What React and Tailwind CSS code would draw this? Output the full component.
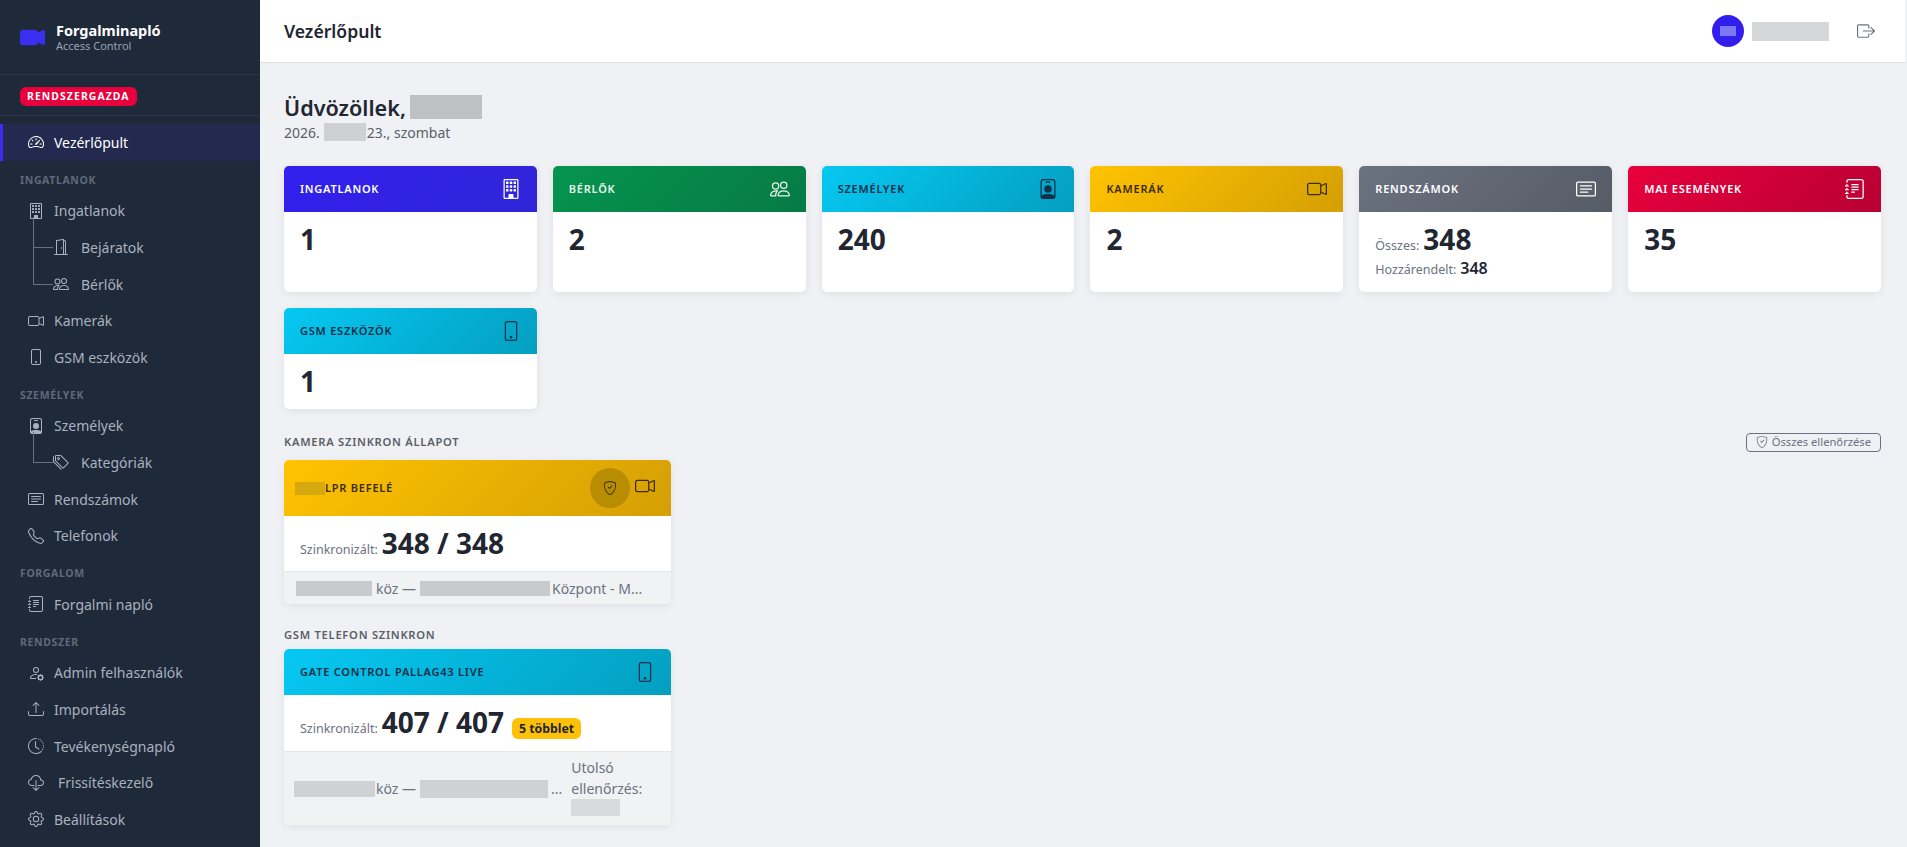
import React from "react";
import {
  BsSpeedometer2, BsBuilding, BsDoorOpen, BsPeople, BsCameraVideo, BsCameraVideoFill, BsPhone,
  BsPersonBadge, BsTags, BsCardText, BsTelephone, BsJournalText, BsPersonGear, BsUpload,
  BsClockHistory, BsCloudDownload, BsGear, BsBoxArrowRight, BsShieldCheck,
} from "react-icons/bs";

const blue = "bg-linear-135 from-[#321fee] to-[#3025d8] text-white";
const green = "bg-linear-135 from-[#05944f] to-[#067a45] text-[#e8f6ee]";
const cyan = "bg-linear-135 from-[#06c8f2] to-[#049fc0] text-[#12304a]";
const yellow = "bg-linear-135 from-[#ffc300] to-[#d49f05] text-[#3b2c08]";
const gray = "bg-linear-135 from-[#6b7280] to-[#565c66] text-white";
const red = "bg-linear-135 from-[#e8003c] to-[#b80033] text-white";
const cardShadow = "shadow-[0_2px_8px_rgba(0,0,0,0.07)]";

function NavItem({ icon: Icon, label, active, extra }) {
  return (
    <div
      className={`flex items-center h-[36.6px] pl-[25px] text-[14px] border-l-[3px] ${
        active ? "bg-[#23294f] border-[#3a2ff0] text-white" : "border-transparent text-[#a9b2bf]"
      }`}
    >
      <Icon className={`w-4 h-4 shrink-0 ${extra ? "mr-[14px]" : "mr-[10px]"}`} />
      <span>{label}</span>
    </div>
  );
}

function SubItem({ icon: Icon, label, last }) {
  return (
    <div className="relative flex items-center h-[36.6px] pl-[53px] text-[14px] text-[#a9b2bf]">
      <div className={`absolute left-[33px] top-[-12px] w-px bg-[#667080] ${last ? "h-[31px]" : "h-[49px]"}`} />
      <div className="absolute left-[33px] top-[18px] w-[20px] h-px bg-[#667080]" />
      <Icon className="w-4 h-4 mr-[12px] shrink-0" />
      <span>{label}</span>
    </div>
  );
}

function NavTitle({ children }) {
  return (
    <div className="h-[32px] pt-[12px] pl-[20px] text-[10.5px] leading-[14px] font-bold tracking-[0.06em] text-[#5e6a7b]">
      {children}
    </div>
  );
}

function Sidebar() {
  return (
    <aside className="w-[260px] shrink-0 h-[847px] bg-[#1e2939] overflow-hidden">
      <div className="flex items-center h-[75px] pl-[20px] border-b border-[#2c3747]">
        <BsCameraVideoFill className="w-[25px] h-[25px] text-[#3a2ff0] mr-[11px]" />
        <div>
          <div className="text-[14.5px] leading-[17px] font-bold text-white">Forgalminapló</div>
          <div className="text-[11px] leading-[14px] text-[#9aa3b0]">Access Control</div>
        </div>
      </div>
      <div className="h-[41px] pt-[12px] pl-[20px] border-b border-[#2c3747]">
        <span className="block w-fit bg-[#e8003c] text-white text-[10.4px] leading-[19px] font-bold tracking-[0.105em] px-[7px] rounded-md">
          RENDSZERGAZDA
        </span>
      </div>
      <div className="pt-[8px]">
        <NavItem icon={BsSpeedometer2} label="Vezérlőpult" active />
        <NavTitle>INGATLANOK</NavTitle>
        <NavItem icon={BsBuilding} label="Ingatlanok" />
        <SubItem icon={BsDoorOpen} label="Bejáratok" />
        <SubItem icon={BsPeople} label="Bérlők" last />
        <NavItem icon={BsCameraVideo} label="Kamerák" />
        <NavItem icon={BsPhone} label="GSM eszközök" />
        <NavTitle>SZEMÉLYEK</NavTitle>
        <NavItem icon={BsPersonBadge} label="Személyek" />
        <SubItem icon={BsTags} label="Kategóriák" last />
        <NavItem icon={BsCardText} label="Rendszámok" />
        <NavItem icon={BsTelephone} label="Telefonok" />
        <NavTitle>FORGALOM</NavTitle>
        <NavItem icon={BsJournalText} label="Forgalmi napló" />
        <NavTitle>RENDSZER</NavTitle>
        <NavItem icon={BsPersonGear} label="Admin felhasználók" />
        <NavItem icon={BsUpload} label="Importálás" />
        <NavItem icon={BsClockHistory} label="Tevékenységnapló" />
        <NavItem icon={BsCloudDownload} label="Frissítéskezelő" extra />
        <NavItem icon={BsGear} label="Beállítások" />
      </div>
    </aside>
  );
}

function Blur({ className }) {
  return <span className={`inline-block ${className}`} />;
}

function StatCard({ title, icon: Icon, color, value, short, children }) {
  return (
    <div className={`${short ? "h-[101px]" : "h-[126px]"} rounded-[5px] bg-white ${cardShadow} overflow-hidden`}>
      <div className={`h-[46px] flex items-center justify-between px-[16px] ${color}`}>
        <span className="text-[11px] font-semibold tracking-[0.07em]">{title}</span>
        <Icon className="w-5 h-5 mb-[1px]" />
      </div>
      <div className="pt-[9px] pl-[16px]">
        {children || <div className="text-[28px] leading-[36px] font-bold text-[#212631]">{value}</div>}
      </div>
    </div>
  );
}

function SectionTitle({ children }) {
  return <div className="h-4 text-[11.2px] leading-4 font-semibold tracking-[0.065em] text-[#5b5f66]">{children}</div>;
}

function App() {
  return (
    <div className="flex h-[847px] overflow-hidden bg-[#eff1f5] font-['Noto_Sans',sans-serif]">
      <Sidebar />
      <div className="flex-1 min-w-0 pr-[2px]">
        <header className="h-[63px] bg-white border-b border-[#dcdee2] flex items-center justify-between pl-[24px] pr-[30px]">
          <h1 className="text-[17.6px] font-semibold text-[#212631]">Vezérlőpult</h1>
          <div className="flex items-center">
            <div className="w-8 h-8 rounded-full bg-[#321fee] flex items-center justify-center">
              <span className="w-4 h-[10px] bg-[#7d78f5]" />
            </div>
            <Blur className="w-[77px] h-[19px] ml-2 bg-[#d6d7d9]" />
            <BsBoxArrowRight className="w-[18px] h-[18px] ml-[28px] text-[#6b7280]" />
          </div>
        </header>
        <main className="px-[24px] pt-[32px]">
          <div className="flex items-end h-[26px] text-[21.6px] leading-[26px] font-semibold text-[#212631]">
            <span>Üdvözöllek,</span>
            <Blur className="w-[72px] h-[24px] ml-[4px] mb-[2px] bg-[#bfc0c3]" />
          </div>
          <div className="flex items-center h-[20px] mt-[1px] text-[14px] text-[#5b5f66]">
            <span>2026.</span>
            <Blur className="w-[42px] h-[18px] ml-[4px] mr-[1px] bg-[#cfd0d2]" />
            <span>23., szombat</span>
          </div>
          <div className="grid grid-cols-6 gap-x-4 gap-y-[16px] mt-[24px]">
            <StatCard title="INGATLANOK" icon={BsBuilding} color={blue} value="1" />
            <StatCard title="BÉRLŐK" icon={BsPeople} color={green} value="2" />
            <StatCard title="SZEMÉLYEK" icon={BsPersonBadge} color={cyan} value="240" />
            <StatCard title="KAMERÁK" icon={BsCameraVideo} color={yellow} value="2" />
            <StatCard title="RENDSZÁMOK" icon={BsCardText} color={gray}>
              <div className="flex items-baseline h-[36px] text-[12.5px] text-[#6b7280]">
                Összes:
                <span className="ml-[4px] text-[28px] leading-[36px] font-bold text-[#212631]">348</span>
              </div>
              <div className="flex items-baseline -mt-[1px] text-[12.5px] text-[#6b7280]">
                Hozzárendelt:
                <span className="ml-[4px] text-[16px] font-semibold text-[#212631]">348</span>
              </div>
            </StatCard>
            <StatCard title="MAI ESEMÉNYEK" icon={BsJournalText} color={red} value="35" />
            <StatCard title="GSM ESZKÖZÖK" icon={BsPhone} color={cyan} value="1" short />
          </div>

          <div className="flex items-center justify-between mt-[23px] h-[20px]">
            <SectionTitle>KAMERA SZINKRON ÁLLAPOT</SectionTitle>
            <div className="flex items-center h-[19px] px-[9px] border border-[#6b7280] rounded text-[11.2px] text-[#6b7280]">
              <BsShieldCheck className="w-3 h-3 mr-1" />
              Összes ellenőrzése
            </div>
          </div>
          <div className={`w-[387px] mt-[8px] rounded-[5px] bg-white ${cardShadow} overflow-hidden`}>
            <div className={`h-[56px] flex items-center justify-between pl-[11px] pr-[16px] ${yellow}`}>
              <div className="flex items-center text-[11px] font-semibold tracking-[0.07em]">
                <span className="w-[30px] h-[13px] bg-[#d6a90e]" />
                LPR BEFELÉ
              </div>
              <div className="flex items-center">
                <div className="w-10 h-10 rounded-full bg-[#b98d02] flex items-center justify-center">
                  <BsShieldCheck className="w-[14px] h-[14px]" />
                </div>
                <BsCameraVideo className="w-5 h-5 ml-[5px] mb-[4px]" />
              </div>
            </div>
            <div className="h-[56px] flex items-baseline pt-[6px] pl-[16px] text-[12.5px] text-[#6b7280] border-b border-[#e6e7ea]">
              <span>Szinkronizált:</span>
              <span className="ml-[4px] text-[28px] leading-[42px] font-bold text-[#212631]">348 / 348</span>
            </div>
            <div className="h-[32px] flex items-center pl-[12px] text-[14px] bg-[#f1f2f4] text-[#6b7280]">
              <Blur className="w-[76px] h-[15px] bg-[#c9cacc]" />
              <span className="ml-1">köz —</span>
              <Blur className="w-[130px] h-[15px] ml-1 bg-[#c9cacc]" />
              <span className="ml-[2px]">Központ - M...</span>
            </div>
          </div>

          <div className="mt-[23px]">
            <SectionTitle>GSM TELEFON SZINKRON</SectionTitle>
          </div>
          <div className={`w-[387px] mt-[6px] rounded-[5px] bg-white ${cardShadow} overflow-hidden`}>
            <div className={`h-[46px] flex items-center justify-between px-[16px] ${cyan}`}>
              <span className="text-[11px] font-semibold tracking-[0.07em]">GATE CONTROL PALLAG43 LIVE</span>
              <BsPhone className="w-5 h-5" />
            </div>
            <div className="h-[57px] flex items-baseline pt-[6px] pl-[16px] text-[12.5px] text-[#6b7280] border-b border-[#e6e7ea]">
              <span>Szinkronizált:</span>
              <span className="ml-[4px] text-[28px] leading-[42px] font-bold text-[#212631]">407 / 407</span>
              <span className="ml-2 px-[7px] h-[21px] leading-[21px] rounded-md bg-[#ffc107] text-[12.3px] font-bold text-[#212631]">
                5 többlet
              </span>
            </div>
            <div className="h-[73px] flex items-center pl-[10px] text-[14px] bg-[#f1f2f4] text-[#6b7280]">
              <Blur className="w-[81px] h-[16px] bg-[#d0d1d3]" />
              <span className="ml-[1px]">köz —</span>
              <Blur className="w-[128px] h-[18px] ml-1 bg-[#d0d1d3]" />
              <span className="ml-[3px]">...</span>
              <div className="ml-[9px] leading-[21px]">
                <div>Utolsó</div>
                <div>ellenőrzés:</div>
                <Blur className="block w-[49px] h-[17px] bg-[#d9dadc]" />
              </div>
            </div>
          </div>
        </main>
      </div>
    </div>
  );
}

export default App;
